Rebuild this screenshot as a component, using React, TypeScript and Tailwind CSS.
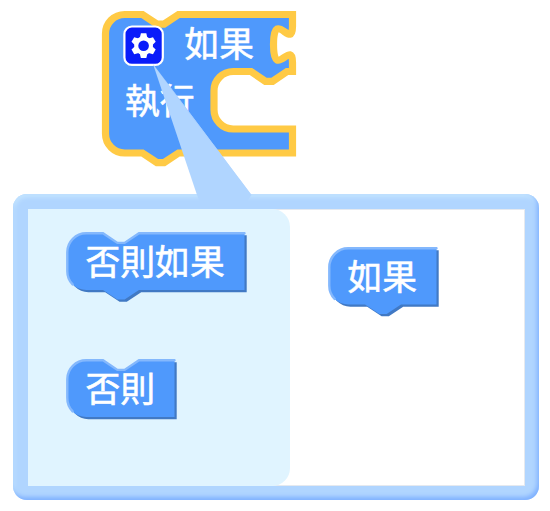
const FONT = "font-['Noto_Sans_CJK_TC',sans-serif]";

interface BlockProps {
  label: string;
  width: number;
  height: number;
  previous?: boolean;
  next?: boolean;
  place: string;
}

function Block({ label, width, height, previous, next, place }: BlockProps) {
  const top = previous ? "H36 l14.4,9.6 7.2,0 14.4,-9.6" : "";
  const bottom = next ? "H72 l-14.4,9.6 -7.2,0 -14.4,-9.6" : "";
  const outline = `M0,19.2 A19.2,19.2 0 0 1 19.2,0 ${top} H${width} V${height} ${bottom} H19.2 A19.2,19.2 0 0 1 0,${height - 19.2} Z`;
  const light = `M5.6,${height - 5.6} A19.2,19.2 0 0 1 0.3,${height - 19.2} V19.2 A18.9,18.9 0 0 1 19.2,0.3 ${top} H${width}`;
  return (
    <svg className={`absolute overflow-visible ${place}`} width={width} height={height}>
      <path d={outline} transform="translate(2.2 2.2)" fill="#4179c4" />
      <path d={outline} fill="#4f99fc" />
      <path d={light} fill="none" stroke="#84b8fd" strokeWidth="2.4" strokeLinecap="round" />
      <text x="18.5" y="42" fontSize="34.8" fill="#fff" stroke="#fff" strokeWidth="0.6" className={FONT}>
        {label}
      </text>
    </svg>
  );
}

function GearIcon() {
  return (
    <g transform="translate(143.6 45.7)">
      <rect x="-19.2" y="-19.2" width="38.4" height="38.4" rx="7.5" fill="#0a1cfa" stroke="#fff" strokeWidth="2.2" />
      <g fill="#fff">
        <circle r="9.4" />
        {[0, 60, 120].map((angle) => (
          <path key={angle} transform={`rotate(${angle})`} d="M-2.7,-12.4 H2.7 L4,-7 V7 L2.7,12.4 H-2.7 L-4,7 V-7 Z" />
        ))}
      </g>
      <circle r="5.3" fill="#0a1cfa" />
    </g>
  );
}

function IfBlock() {
  return (
    <svg className="absolute left-0 top-0" width="550" height="190">
      <path
        d="M105.5,33.7 A19.2,19.2 0 0 1 124.7,14.5 H142.5 l14.4,9.6 7.2,0 14.4,-9.6 H292.5 v12 c0,24 -19,-19 -19,18 s19,-6 19,18 V71.5 H287 l-14.4,9.8 -7.2,0 -14.4,-9.8 H233.2 A19.2,19.2 0 0 0 214,90.7 V109.8 A19.2,19.2 0 0 0 233.2,129 H292.5 V153 H178.5 l-14.4,9.6 -7.2,0 -14.4,-9.6 H124.7 A19.2,19.2 0 0 1 105.5,133.8 Z"
        fill="#4f99fc"
        stroke="#ffca45"
        strokeWidth="7.2"
      />
      <g fontSize="34.8" fill="#fff" stroke="#fff" strokeWidth="0.6" className={FONT}>
        <text x="184.5" y="56.5">如果</text>
        <text x="125" y="114">執行</text>
      </g>
      <GearIcon />
    </svg>
  );
}

export default function App() {
  return (
    <main className="relative h-[511px] w-[550px] overflow-hidden bg-white">
      <IfBlock />
      <section className="absolute left-[13px] top-[194px] h-[306px] w-[526px] rounded-[14px] bg-[#b0d5ff] p-[15px] shadow-[inset_-2px_-3px_4px_#7fb1ff,inset_1px_3px_4px_#c5e5ff]">
        <div className="flex h-[277px] w-[497px] border border-[#e5e9ef] bg-white">
          <div className="-my-px -ml-px w-[262px] rounded-r-[18px] bg-[#e0f4ff]" />
        </div>
      </section>
      <svg className="absolute left-0 top-0" width="550" height="206">
        <defs>
          <linearGradient id="tail" gradientUnits="userSpaceOnUse" x1="215" y1="148" x2="220" y2="144">
            <stop offset="0" stopColor="#b0d5ff" />
            <stop offset="1" stopColor="#8fbcff" />
          </linearGradient>
        </defs>
        <path d="M153,64 L197,195 L201,204 H245 L251.5,195 Z" fill="#b0d5ff" />
        <path d="M153,64 L251.5,195 L249,195 Z" fill="url(#tail)" />
      </svg>
      <Block label="否則如果" width={177.5} height={57} previous next place="left-[67px] top-[233px]" />
      <Block label="否則" width={107.5} height={57} previous place="left-[67px] top-[360px]" />
      <Block label="如果" width={107.5} height={56.5} next place="left-[329px] top-[248px]" />
    </main>
  );
}
